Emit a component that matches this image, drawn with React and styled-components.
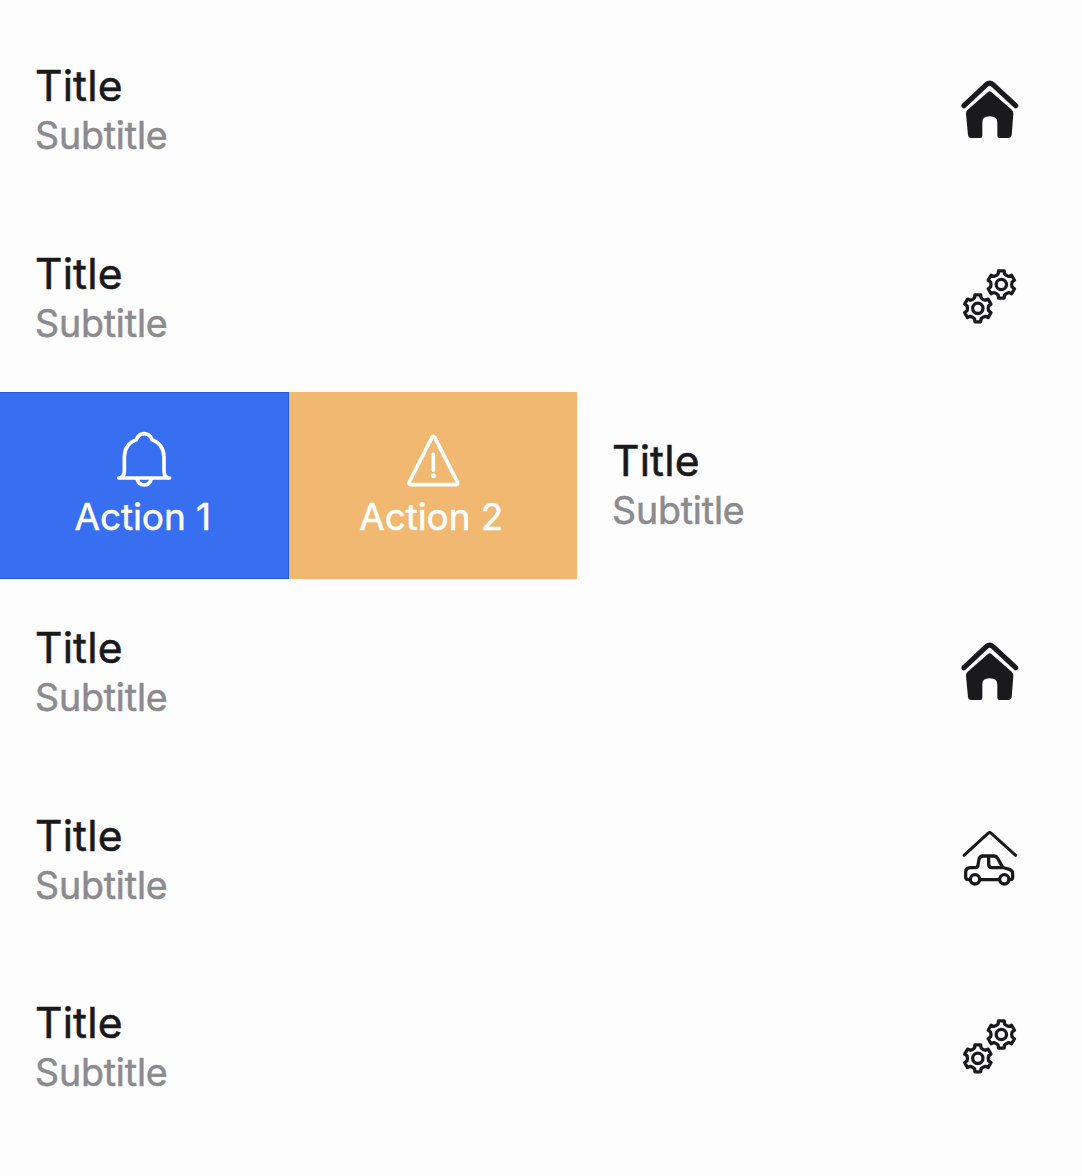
import React from "react";
import styled, { createGlobalStyle } from "styled-components";

const GlobalStyle = createGlobalStyle`
  * { box-sizing: border-box; }
  body { margin: 0; background: #fdfdfd; font-family: Inter, "Liberation Sans", sans-serif; }
`;

const List = styled.main`
  display: flex;
  flex-direction: column;
  width: 1082px;
  height: 1176px;
  padding-top: 17.2px;
  overflow: hidden;
  background: #fdfdfd;
`;

const Row = styled.section`
  display: flex;
  flex: 0 0 187.35px;
  overflow: hidden;
`;

const Content = styled.div`
  display: flex;
  flex: 1 0 1082px;
  justify-content: space-between;
  padding: 44px 52px 0 35px;
`;

const Labels = styled.div`
  display: flex;
  flex-direction: column;
`;

const Title = styled.div`
  color: #19191c;
  font-size: 42.6px;
  line-height: 50px;
  letter-spacing: 0.15px;
  -webkit-text-stroke: 0.55px currentColor;
`;

const Subtitle = styled.div`
  color: #8b8b8f;
  font-size: 37.5px;
  line-height: 49px;
  letter-spacing: -0.15px;
  -webkit-text-stroke: 0.55px currentColor;
`;

const Graphic = styled.svg`
  display: block;
  flex: none;
  width: 80px;
  height: 80px;
  margin-top: 8.8px;
  fill: none;
  stroke: #1a1a1d;
  stroke-width: 9.8;
  stroke-linecap: round;
  stroke-linejoin: round;
`;

const Action = styled.button`
  display: flex;
  flex: 0 0 288.5px;
  flex-direction: column;
  align-items: center;
  height: 187px;
  padding: 33px 0 0;
  border: 0;
  background: ${(p) => p.$color};
  box-shadow: ${(p) => (p.$edge ? `inset -1px 1px 0 ${p.$edge}, inset 0 -1px 0 ${p.$edge}` : "inset 1px 0 0 #e3b3ae")};
  color: #fff;
  font: 400 37px/48px Inter, "Liberation Sans", sans-serif;
`;

const ActionLabel = styled.span`
  padding-right: 3px;
  letter-spacing: -0.12px;
  -webkit-text-stroke: 0.5px currentColor;
`;

const ActionGraphic = styled.svg`
  display: block;
  width: 70px;
  height: 68px;
  fill: none;
  stroke: #fff;
  stroke-width: 11;
  stroke-linecap: round;
  stroke-linejoin: round;
`;

const toothProfile = [
  [-30, 31], [-17, 33], [-12, 41.5], [12, 41.5], [17, 33],
];

const gearPath = (cx, cy) => {
  const points = [];
  for (let tooth = 0; tooth < 6; tooth += 1) {
    toothProfile.forEach(([offset, radius]) => {
      const angle = ((tooth * 60 + offset - 90) * Math.PI) / 180;
      points.push(`${(cx + radius * Math.cos(angle)).toFixed(1)} ${(cy + radius * Math.sin(angle)).toFixed(1)}`);
    });
  }
  return `M${points.join("L")}Z`;
};

const HouseIcon = () => (
  <Graphic viewBox="0 0 240 240">
    <path d="M42 107 109 44Q119 35 129 44L197 107" strokeWidth="15.500" />
    <path d="M114 66Q119 61 124 66L185 119Q191 124 190 132L185 196Q184 204 177 204H149Q142 204 142 197V158Q142 139 119 139T97 158V197Q97 204 90 204H62Q55 204 54 196L48 132Q47 124 53 119Z" fill="#1a1a1d" stroke="none" />
  </Graphic>
);

const GearsIcon = () => (
  <Graphic viewBox="0 0 240 240">
    <path d={gearPath(154, 82.5)} />
    <circle cx="154" cy="82.5" r="15.5" />
    <path d={gearPath(83.5, 154)} />
    <circle cx="83.5" cy="154" r="15.5" />
  </Graphic>
);

const GarageIcon = () => (
  <Graphic viewBox="0 -2 240 240">
    <path d="M42 107 114 41Q119 37 124 41L197 107" strokeWidth="9" />
    <path d="M61 180H56Q47 180 47 171V158Q47 144 62 144H76Q83 144 84 136L87 119Q89 109 99 109H130Q139 109 143 116L156 140Q158 144 164 145L178 149Q188 152 188 162V173Q188 180 181 180H177M90 180H148M116 109V134Q116 144 126 144H160" />
    <circle cx="75" cy="179" r="14" />
    <circle cx="163" cy="179" r="14" />
  </Graphic>
);

const BellIcon = () => (
  <ActionGraphic viewBox="-2 0 210 204">
    <path d="M27 159H180M27 159Q44 158 44 138V95Q45 58 80 44Q87 26 103.500 26T127 44Q162 58 163 95V138Q163 158 180 159" />
    <path d="M82 160Q85 180 103.500 180T125 160" />
  </ActionGraphic>
);

const WarningIcon = () => (
  <ActionGraphic viewBox="-2 0 210 204">
    <path d="M100 37Q104 31 108 37L176 171Q180 179 172 179H36Q28 179 32 171Z" />
    <path d="M104 88V136" />
    <circle cx="104" cy="152" r="7.5" fill="#fff" stroke="none" />
  </ActionGraphic>
);

const icons = { house: HouseIcon, gears: GearsIcon, garage: GarageIcon };
const rows = ["house", "gears", "swiped", "house", "garage", "gears"];

export default function App() {
  return (
    <>
      <GlobalStyle />
      <List>
        {rows.map((kind, index) => {
          const Icon = icons[kind];
          return (
            <Row key={index}>
              {kind === "swiped" && (
                <>
                  <Action $color="#386ef0" $edge="#2859d5">
                    <BellIcon />
                    <ActionLabel>Action 1</ActionLabel>
                  </Action>
                  <Action $color="#f1b871">
                    <WarningIcon />
                    <ActionLabel>Action 2</ActionLabel>
                  </Action>
                </>
              )}
              <Content>
                <Labels>
                  <Title>Title</Title>
                  <Subtitle>Subtitle</Subtitle>
                </Labels>
                {Icon && <Icon />}
              </Content>
            </Row>
          );
        })}
      </List>
    </>
  );
}
